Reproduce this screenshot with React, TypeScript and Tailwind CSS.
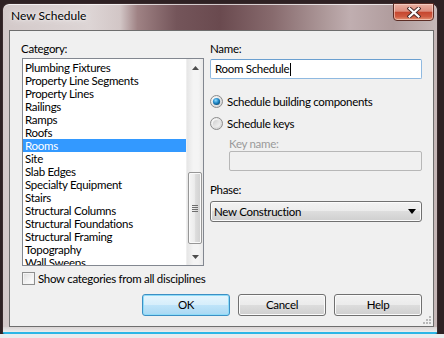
import React from "react";

const items = [
  "Plumbing Fixtures",
  "Property Line Segments",
  "Property Lines",
  "Railings",
  "Ramps",
  "Roofs",
  "Rooms",
  "Site",
  "Slab Edges",
  "Specialty Equipment",
  "Stairs",
  "Structural Columns",
  "Structural Foundations",
  "Structural Framing",
  "Topography",
  "Wall Sweeps",
];

function Radio({ checked, id }: { checked: boolean; id: string }) {
  return (
    <svg width="13" height="13" viewBox="0 0 13 13" className="shrink-0">
      <defs>
        <radialGradient id={`rf${id}`} cx="0.35" cy="0.35" r="0.8">
          <stop offset="0" stopColor="#ffffff" />
          <stop offset="1" stopColor="#cfcfcf" />
        </radialGradient>
        <radialGradient id={`rd${id}`} cx="0.4" cy="0.35" r="0.7">
          <stop offset="0" stopColor="#8fdcff" />
          <stop offset="0.55" stopColor="#1f86c6" />
          <stop offset="1" stopColor="#0b4a72" />
        </radialGradient>
        <linearGradient id={`ru${id}`} x1="0" y1="0" x2="1" y2="1">
          <stop offset="0" stopColor="#cfcfcf" />
          <stop offset="1" stopColor="#f6f6f6" />
        </linearGradient>
      </defs>
      <circle cx="6.5" cy="6.5" r="6" fill={`url(#rf${id})`} stroke="#8c8c8c" />
      {checked ? (
        <circle cx="6.5" cy="6.5" r="3.6" fill={`url(#rd${id})`} />
      ) : (
        <circle cx="6.5" cy="6.5" r="3.6" fill={`url(#ru${id})`} />
      )}
    </svg>
  );
}

function Btn({ children, primary }: { children: React.ReactNode; primary?: boolean }) {
  return (
    <div
      className={
        primary
          ? "w-[88px] h-[22px] rounded-[3px] border border-[#3c8fc4] bg-[linear-gradient(180deg,#e6f5fd_0%,#d6eefb_49%,#bfe4f9_50%,#a9d8f3_100%)] shadow-[inset_0_0_0_1px_#8fdcf8] flex items-center justify-center text-[11.5px] tracking-[-0.3px] text-black"
          : "w-[88px] h-[22px] rounded-[3px] border border-[#707070] bg-[linear-gradient(180deg,#f2f2f2_0%,#ebebeb_49%,#dddddd_50%,#cfcfcf_100%)] shadow-[inset_0_0_0_1px_#fbfbfb] flex items-center justify-center text-[11.5px] tracking-[-0.3px] text-black"
      }
    >
      {children}
    </div>
  );
}

export default function App() {
  return (
    <div className="w-[444px] h-[338px] overflow-hidden bg-[#2e2123] flex flex-col [font-family:Lato,sans-serif] text-black text-[11.5px] tracking-[-0.3px]">
      <div className="relative ml-[2px] mt-[3px] w-[436px] h-[331px] rounded-t-[7px] rounded-b-[3px] border border-[#3a2b2d] border-b-[#2cb6e6] border-b-2 bg-[linear-gradient(90deg,#d3c9c9_0%,#ddd5d5_20%,#d2c6c6_27%,#9f8284_31%,#74555a_40%,#6a4a4f_50%,#876a6d_62%,#ad9899_74%,#c0aeb0_80%,#b09c9d_90%,#c6b8b8_100%)] shadow-[inset_0_1px_0_rgba(255,255,255,0.7)] flex flex-col">
        {/* Title bar */}
        <div className="h-[26px] flex items-center pl-[8px] pb-[2px]">
          <span className="text-[12px] tracking-normal text-black [text-shadow:0_0_8px_rgba(255,255,255,0.95),0_0_3px_rgba(255,255,255,0.9)]">
            New Schedule
          </span>
        </div>
        <div className="absolute left-[390px] top-[-1px] w-[41px] h-[18px] rounded-b-[4px] border border-[#5c2c24] bg-[linear-gradient(180deg,#eab0a2_0%,#dc8e7e_45%,#c6472f_52%,#cf5a40_78%,#e39576_100%)] shadow-[inset_0_0_0_1px_rgba(255,230,220,0.55)] flex items-center justify-center">
          <svg width="14" height="11" viewBox="0 0 14 11">
            <path d="M2.5 1.5 L11.5 9.5 M11.5 1.5 L2.5 9.5" stroke="#4a2a28" strokeWidth="4" strokeLinecap="square" />
            <path d="M2.5 1.5 L11.5 9.5 M11.5 1.5 L2.5 9.5" stroke="#ffffff" strokeWidth="2.2" strokeLinecap="square" />
          </svg>
        </div>

        {/* Client */}
        <div className="relative ml-[6px] w-[425px] h-[297px] border border-[#6e6e6e] bg-[#f0f0f0] flex flex-col pl-[12px] pr-[11px] pt-[10px]">
          <div className="flex gap-[6px]">
            {/* Left column */}
            <div className="w-[182px] flex flex-col">
              <div className="h-[15px] leading-[15px] ml-[-1px]">Category:</div>
              <div className="mt-[2px] h-[208px] border border-[#828790] bg-white flex">
                <div className="flex-1 pt-[2px] overflow-hidden">
                  {items.map((it) => (
                    <div
                      key={it}
                      className={
                        it === "Rooms"
                          ? "h-[13px] leading-[13px] pl-[2px] bg-[#3399ff] text-white whitespace-nowrap"
                          : "h-[13px] leading-[13px] pl-[2px] whitespace-nowrap"
                      }
                    >
                      {it}
                    </div>
                  ))}
                </div>
                <div className="w-[17px] flex flex-col bg-[linear-gradient(90deg,#e6e6e6_0%,#f4f4f4_40%,#f4f4f4_70%,#e9e9e9_100%)] border-l border-[#efefef]">
                  <div className="h-[17px] flex items-center justify-center">
                    <svg width="7" height="4" viewBox="0 0 7 4">
                      <path d="M0 4 L3.5 0 L7 4 Z" fill="#4d4d4d" />
                    </svg>
                  </div>
                  <div className="flex-1 flex flex-col">
                    <div className="mt-[96px] ml-[1px] w-[14px] h-[72px] rounded-[2px] border border-[#979797] bg-[linear-gradient(90deg,#f5f5f5_0%,#ececec_45%,#dcdcdc_55%,#d0d0d0_100%)] shadow-[inset_0_0_0_1px_#fafafa] flex flex-col items-center justify-center gap-[1px]">
                      <div className="w-[6px] h-px bg-[#6e6e6e]" />
                      <div className="w-[6px] h-px bg-[#6e6e6e]" />
                      <div className="w-[6px] h-px bg-[#6e6e6e]" />
                      <div className="w-[6px] h-px bg-[#6e6e6e]" />
                    </div>
                  </div>
                  <div className="h-[17px] flex items-center justify-center">
                    <svg width="7" height="4" viewBox="0 0 7 4">
                      <path d="M0 0 L7 0 L3.5 4 Z" fill="#4d4d4d" />
                    </svg>
                  </div>
                </div>
              </div>
              <div className="mt-[6px] h-[13px] flex items-center gap-[3px] whitespace-nowrap">
                <div className="w-[13px] h-[13px] border border-[#8e8f8f] bg-[linear-gradient(135deg,#dcdcdc_0%,#f4f4f4_60%,#ffffff_100%)] shadow-[inset_0_0_0_1px_#f4f4f4] shrink-0" />
                <span className="leading-[13px]">Show categories from all disciplines</span>
              </div>
            </div>

            {/* Right column */}
            <div className="w-[212px] flex flex-col">
              <div className="h-[15px] leading-[15px]">Name:</div>
              <div className="mt-[3px] h-[20px] rounded-[2px] border border-[#8fb9e0] border-t-[#6a9fd0] bg-white flex items-center pl-[4px]">
                <span>Room Schedule</span>
                <span className="inline-block w-px h-[13px] bg-black ml-[1px]" />
              </div>
              <div className="mt-[15px] h-[15px] flex items-center gap-[4px]">
                <Radio checked id="a" />
                <span>Schedule building components</span>
              </div>
              <div className="mt-[7px] h-[15px] flex items-center gap-[4px]">
                <Radio checked={false} id="b" />
                <span>Schedule keys</span>
              </div>
              <div className="mt-[5px] ml-[19px] h-[15px] leading-[15px] text-[#9a9a9a]">Key name:</div>
              <div className="ml-[19px] h-[20px] rounded-[2px] border border-[#b7b7b7] bg-[#f0f0f0]" />
              <div className="mt-[11px] h-[15px] leading-[15px]">Phase:</div>
              <div className="mt-[4px] h-[21px] rounded-[3px] border border-[#707070] bg-[linear-gradient(180deg,#f2f2f2_0%,#ebebeb_49%,#dddddd_50%,#cfcfcf_100%)] shadow-[inset_0_0_0_1px_#fbfbfb] flex items-center justify-between pl-[3px] pr-[5px]">
                <span>New Construction</span>
                <svg width="8" height="5" viewBox="0 0 8 5">
                  <path d="M0 0 L8 0 L4 5 Z" fill="#000000" />
                </svg>
              </div>
            </div>
          </div>

          <div className="mt-[9px] flex justify-end gap-[8px]">
            <Btn primary>OK</Btn>
            <Btn>Cancel</Btn>
            <Btn>Help</Btn>
          </div>

          <svg className="absolute right-[1px] bottom-[1px]" width="10" height="10" viewBox="0 0 10 10">
            <rect x="7" y="1" width="2" height="2" fill="#b8b8b8" />
            <rect x="4" y="4" width="2" height="2" fill="#b8b8b8" />
            <rect x="7" y="4" width="2" height="2" fill="#b8b8b8" />
            <rect x="1" y="7" width="2" height="2" fill="#b8b8b8" />
            <rect x="4" y="7" width="2" height="2" fill="#b8b8b8" />
            <rect x="7" y="7" width="2" height="2" fill="#b8b8b8" />
          </svg>
        </div>
        <div className="flex-1 bg-[linear-gradient(180deg,#d9d4d4_0%,#ececec_100%)]" />
      </div>
      <div className="flex-1 bg-[#e9ecee]" />
    </div>
  );
}
